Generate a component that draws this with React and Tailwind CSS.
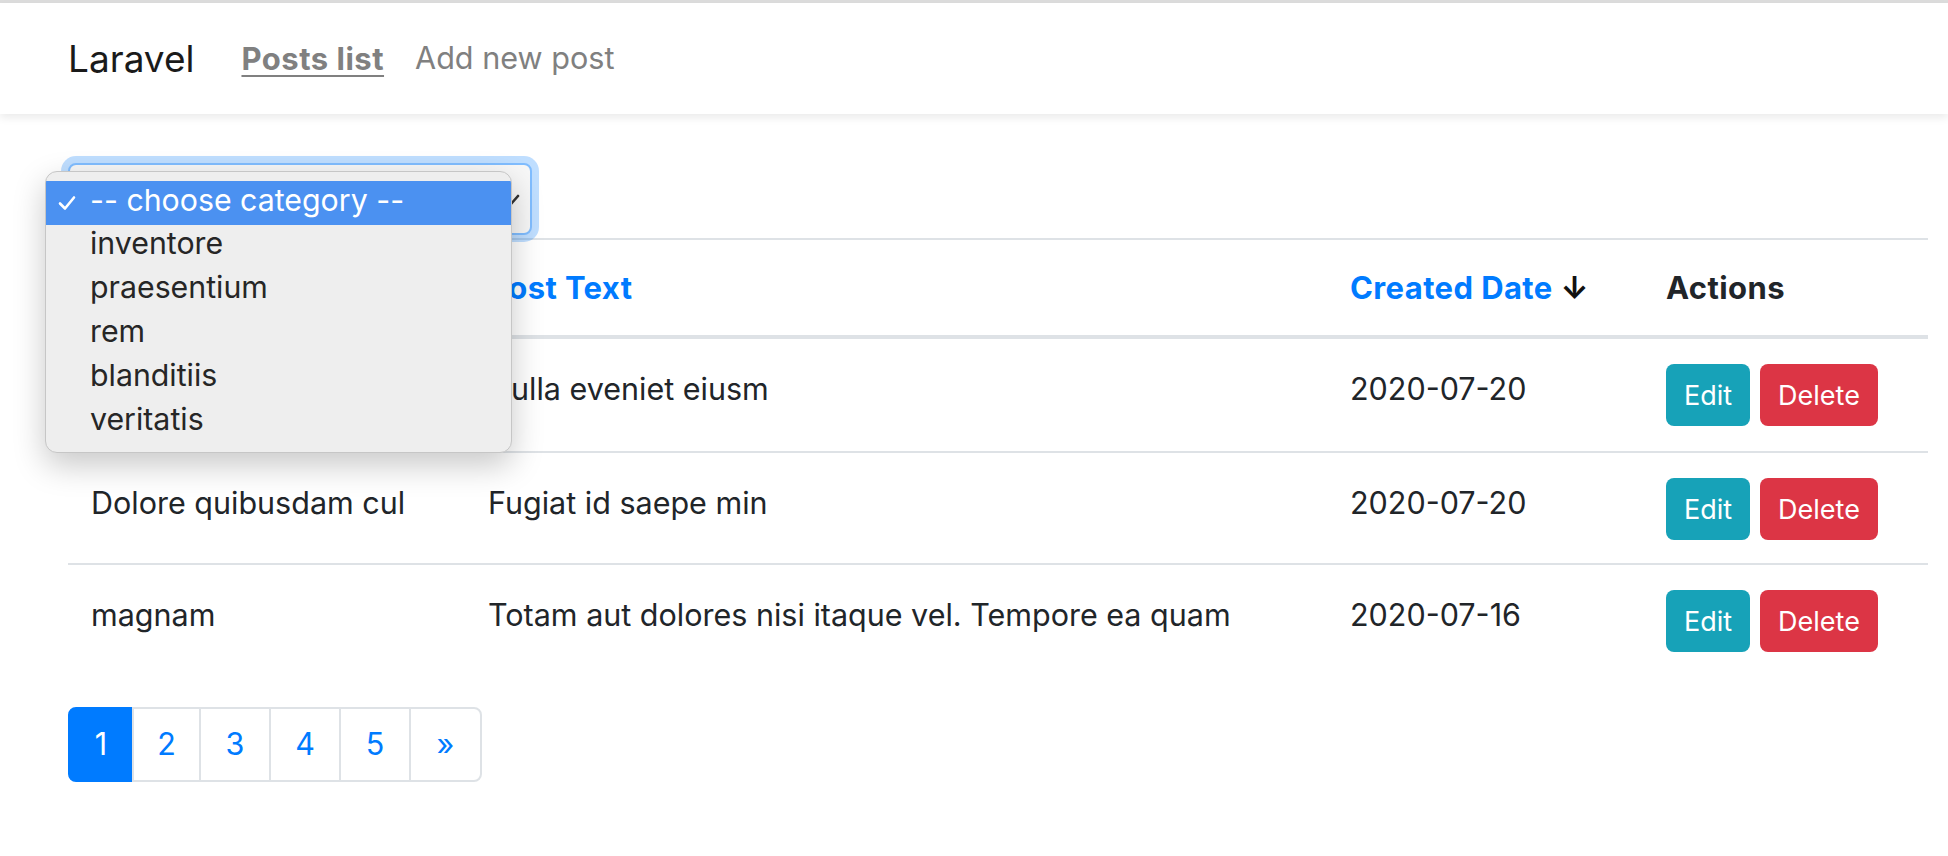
import React from 'react'

const posts = [
  { title: '', text: 'Nulla eveniet eiusm', date: '2020-07-20' },
  { title: 'Dolore quibusdam cul', text: 'Fugiat id saepe min', date: '2020-07-20' },
  { title: 'magnam', text: 'Totam aut dolores nisi itaque vel. Tempore ea quam', date: '2020-07-16' },
]

const categories = ['inventore', 'praesentium', 'rem', 'blanditiis', 'veritatis']

const cols = 'grid grid-cols-[397px_862px_316px_285px]'

const App = () => {
  return (
    <div className="min-h-screen bg-white font-['Inter',sans-serif] text-[#212529]">
      <div className="h-[3px] bg-[#dcdcdc]" />

      {/* navbar */}
      <nav className="relative z-10 flex h-[111px] items-center bg-white pl-[68px] shadow-[0_4px_8px_rgba(0,0,0,0.08)]">
        <span className="mr-[47px] text-[37px] leading-none text-[#1a1a1a]">Laravel</span>
        <a href="#" className="text-[31px] font-bold leading-none tracking-[0.5px] text-[#808080] underline decoration-2 underline-offset-[5px]">
          Posts list
        </a>
        <a href="#" className="ml-[31px] text-[30.6px] leading-none text-[#808080]">
          Add new post
        </a>
      </nav>

      <main className="relative pl-[68px] pr-[20px] pt-[49px]">
        {/* select, opened */}
        <div className="relative h-[72px] w-[464px] rounded-[8px] border-2 border-[#80bdff] bg-[#f7f7f7] shadow-[0_0_0_7px_rgba(0,123,255,0.25)]">
          <svg className="absolute right-[10px] top-[27px]" width="14" height="14" viewBox="0 0 14 14">
            <polyline points="1,9 5,12 12,4" fill="none" stroke="#333" strokeWidth="2.6" strokeLinecap="round" strokeLinejoin="round" />
          </svg>
        </div>

        {/* table */}
        <div className="mt-[3px] border-t-2 border-[#dee2e6] text-[30.5px]">
          <div className={`${cols} h-[99px] border-b-4 border-[#dee2e6] pt-[23px] text-[31px] font-bold leading-[50px] tracking-[0.4px]`}>
            <div className="px-[23px]" />
            <div className="px-[23px] text-[#007bff]">Post Text</div>
            <div className="px-[23px]">
              <span className="text-[#007bff]">Created Date</span>{' '}
              <span className="text-[#111]">↓</span>
            </div>
            <div className="px-[23px] text-[#212529]">Actions</div>
          </div>
          {posts.map((post, index) => (
            <div
              key={index}
              className={`${cols} h-[112px] leading-[50px] ${index > 0 ? 'border-t-2 border-[#dee2e6]' : ''}`}
            >
              <div className="px-[23px] pt-[25px] whitespace-nowrap">{post.title}</div>
              <div className="px-[23px] pt-[25px] whitespace-nowrap">{post.text}</div>
              <div className="px-[23px] pt-[25px]">{post.date}</div>
              <div className="flex gap-[10px] px-[23px] pt-[25px]">
                <button className="h-[62px] w-[84px] rounded-[8px] bg-[#17a2b8] text-[27px] leading-none text-white">
                  Edit
                </button>
                <button className="h-[62px] w-[118px] rounded-[8px] bg-[#dc3545] text-[27px] leading-none text-white">
                  Delete
                </button>
              </div>
            </div>
          ))}
        </div>

        {/* pagination */}
        <div className="mt-[32px] flex text-[30.5px] leading-none">
          <span className="flex h-[75px] w-[66px] items-center justify-center rounded-l-[8px] border-2 border-[#007bff] bg-[#007bff] text-white">
            1
          </span>
          <a href="#" className="-ml-[2px] flex h-[75px] w-[69px] items-center justify-center border-2 border-[#dee2e6] text-[#007bff]">
            2
          </a>
          {['3', '4', '5'].map(n => (
            <a key={n} href="#" className="-ml-[2px] flex h-[75px] w-[72px] items-center justify-center border-2 border-[#dee2e6] text-[#007bff]">
              {n}
            </a>
          ))}
          <a href="#" className="-ml-[2px] flex h-[75px] w-[73px] items-center justify-center rounded-r-[8px] border-2 border-[#dee2e6] text-[#007bff]">
            »
          </a>
        </div>

        {/* native select popup */}
        <div className="absolute left-[45px] top-[57px] z-20 w-[467px] overflow-hidden rounded-[12px] border border-[#c6c6c6] bg-[#eeeeee] pb-[7px] pt-[9px] text-[30.3px] text-[#262626] shadow-[0_12px_32px_rgba(0,0,0,0.22)]">
          <div className="flex h-[44px] items-center bg-[#4b91f1] pb-[5px] text-white">
            <svg className="ml-[12px] mr-[14px] mt-[5px]" width="18" height="16" viewBox="0 0 18 16">
              <polyline points="2,8.5 7,13.5 16,2.5" fill="none" stroke="#fff" strokeWidth="2.6" strokeLinecap="round" strokeLinejoin="round" />
            </svg>
            <span>-- choose category --</span>
          </div>
          {categories.map(c => (
            <div key={c} className="flex h-[44px] items-center pb-[6px] pl-[44px]">
              {c}
            </div>
          ))}
        </div>
      </main>
    </div>
  )
}

export default App
